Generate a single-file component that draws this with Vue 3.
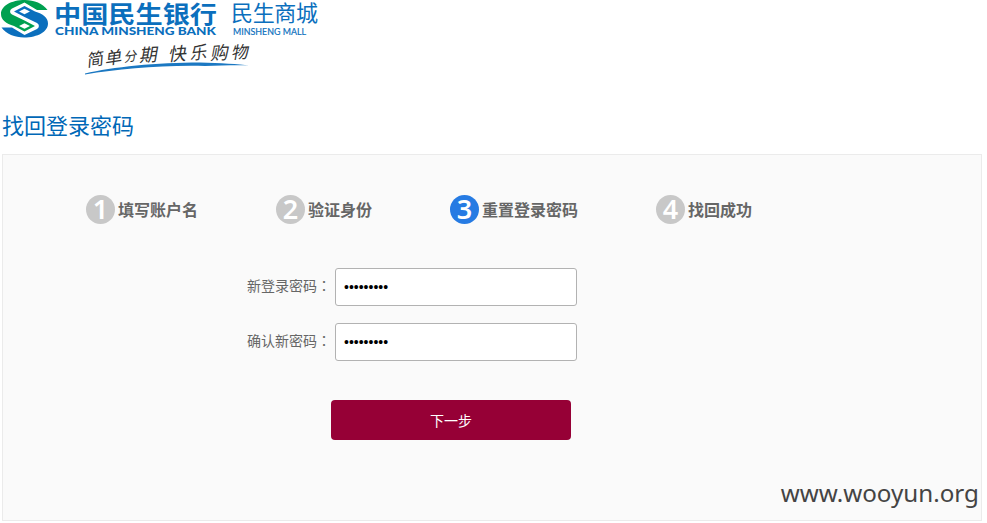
<script setup>
import {ref} from "vue";

const steps = [
  {num: 1, text: "填写账户名"},
  {num: 2, text: "验证身份"},
  {num: 3, text: "重置登录密码"},
  {num: 4, text: "找回成功"}
];
const current = ref(3);
const fields = ref([
  {label: "新登录密码", value: "abcdef123"},
  {label: "确认新密码", value: "abcdef123"}
]);
// x, baseline and tilt of every brushed character
const slogan = [
  {char: "简", x: 87, y: 67, size: 17, turn: -10},
  {char: "单", x: 105, y: 65, size: 17, turn: -8},
  {char: "分", x: 124, y: 62, size: 13, turn: -8},
  {char: "期", x: 139, y: 62, size: 18, turn: -4},
  {char: "快", x: 168, y: 61, size: 18, turn: -4},
  {char: "乐", x: 190, y: 60, size: 17, turn: -8},
  {char: "购", x: 210, y: 60, size: 18, turn: -4},
  {char: "物", x: 231, y: 59, size: 17, turn: -4}
];
</script>

<template>
  <div class="page">
    <header class="header">
      <svg class="logo" width="330" height="80" viewBox="0 0 330 80" fill="none">
        <path fill="#00a050" d="M47.500 10C43 3.500 34 0 25 0C11 0 1 6 1 14C1 20 6 23.500 14 26L24.500 31.500L35 26L24.500 20.500L12 14.500C9.500 13 9.500 10 12 8.500L24.500 2.500L37 10Z"/>
        <path fill="#0b6fbd" d="M1.500 27.500C6 34 15 37.500 24 37.500C38 37.500 48 31.500 48 23.500C48 17.500 43 14 35 11.500L24.500 6L14 11.500L24.500 17L37 23C39.500 24.500 39.500 27.500 37 29L24.500 35L12 27.500Z"/>
        <path fill="#fff" d="M24.500 8.800L30 11.500L24.500 14.300L19 11.500ZM24.500 23.200L30 26L24.500 28.700L19 26Z"/>
        <text class="cn bold" x="54" y="22.500" textLength="163" lengthAdjust="spacingAndGlyphs">中国民生银行</text>
        <text class="en bold" x="55" y="35" textLength="161" lengthAdjust="spacingAndGlyphs">CHINA MINSHENG BANK</text>
        <text class="cn mall" x="231" y="20.500" textLength="87">民生商城</text>
        <text class="en small" x="233" y="35" textLength="73" lengthAdjust="spacingAndGlyphs">MINSHENG MALL</text>
        <text v-for="item in slogan" :key="item.char" class="brush" :x="item.x" :y="item.y" :font-size="item.size" :transform="`rotate(${item.turn} ${item.x} ${item.y})`">{{ item.char }}</text>
        <path fill="#1b78c2" d="M85 73.500C112 67 157 62.500 200 62.500C220 63 239 64 249 65.500C233 65 219 66 205 66C160 65 120 69 85 74.500Z"/>
      </svg>
    </header>
    <h1 class="title">找回登录密码</h1>
    <main class="panel">
      <ol class="steps">
        <li v-for="step in steps" :key="step.num" class="step" :class="{active: step.num === current}">
          <span class="num">{{ step.num }}</span>
          <span class="name">{{ step.text }}</span>
        </li>
      </ol>
      <form class="form" @submit.prevent>
        <label v-for="field in fields" :key="field.label" class="row">
          <span class="label">{{ field.label }}<span class="colon">：</span></span>
          <input v-model="field.value" type="password">
        </label>
        <button class="next" type="submit">下一步</button>
      </form>
      <footer class="site">www.wooyun.org</footer>
    </main>
  </div>
</template>

<style>
body{background: #FFF}
</style>

<style scoped>
.page{width: 987px;height: 523px;overflow: hidden;font-family: "Liberation Sans", "Noto Sans CJK SC", sans-serif;color: #666}
.header{height: 80px}
.logo{display: block}
.cn{font-family: "Noto Sans CJK SC", sans-serif;font-size: 24px;fill: #0b6fbd}
.mall{font-size: 22px}
.en{font-family: Lato, sans-serif;font-size: 12px;fill: #0b6fbd}
.bold{font-weight: 700}
.en.bold{font-weight: 900}
.small{font-size: 10px;stroke: #0b6fbd;stroke-width: .2px}
.brush{font-family: "Noto Sans CJK SC", sans-serif;font-style: italic;fill: #333}
.title{margin: 30px 0 0 2px;font-size: 22px;line-height: 34px;font-weight: 400;color: #0068b7}
.panel{box-sizing: border-box;width: 980px;height: 367px;margin: 10px 0 0 2px;border: 1px solid #ebebeb;background: #fafafa;display: flex;flex-direction: column}
.steps{display: flex;margin: 40px 0 0 83px;padding: 0;list-style: none}
.step{display: flex;align-items: center;gap: 3px;height: 29px;font-size: 16px;font-weight: 700}
.step:nth-child(1){width: 190px}
.step:nth-child(2){width: 174px}
.step:nth-child(3){width: 206px}
.num{width: 29px;height: 29px;border-radius: 50%;background: #c8c8c8;color: #FFF;font-family: "Noto Sans", sans-serif;font-size: 27px;font-weight: 600;line-height: 28px;text-align: center}
.step.active .num{background: #267be3}
.name{line-height: 29px;padding-top: 2px}
.form{display: flex;flex-direction: column;align-items: flex-start;gap: 17px;margin: 44px 0 0 243px}
.row{display: flex;align-items: center;height: 38px;font-size: 14px}
.label{width: 88px;line-height: 34px;padding: 0 0 3px 1px}
.colon{font-family: "Noto Sans CJK TC", sans-serif}
.row input{box-sizing: border-box;width: 242px;height: 38px;padding: 0 8px;border: 1px solid #b2b2b2;border-radius: 3px;background: #FFF;color: #000;font-family: "Liberation Sans", sans-serif;font-size: 14px;outline: none}
.next{width: 240px;height: 40px;margin: 22px 0 0 85px;padding: 0;border: 0;border-radius: 4px;background: #960036;color: #FFF;font-family: inherit;font-size: 14px;cursor: pointer}
.site{margin: auto 2px 10px auto;font-family: "Noto Sans", sans-serif;font-size: 24.2px;line-height: 34px;color: #444}
</style>
